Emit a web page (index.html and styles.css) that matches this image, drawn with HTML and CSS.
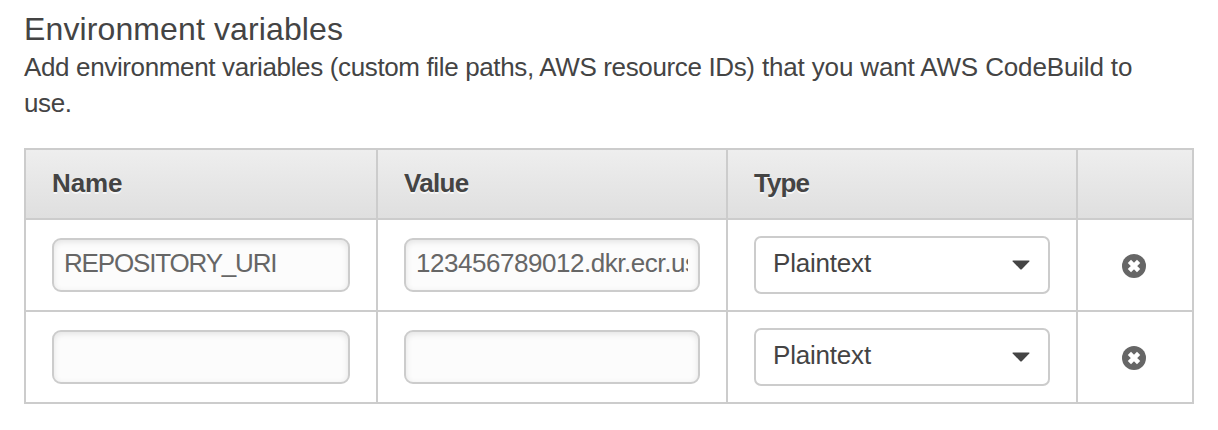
FILE: index.html
```html
<!DOCTYPE html>
<html lang="en">
<head>
<meta charset="utf-8">
<title>Environment variables</title>
<link rel="stylesheet" href="styles.css">
</head>
<body>
<main class="panel">
  <h2 class="title">Environment variables</h2>
  <p class="description"><span class="description-start">Add environment variables (custom file paths, AWS resource IDs)</span> <span class="description-end">that you want AWS CodeBuild to</span> <span class="description-start">use.</span></p>
  <div class="table">
    <div class="head"><span class="label-name">Name</span></div>
    <div class="head"><span class="label-value">Value</span></div>
    <div class="head"><span class="label-type">Type</span></div>
    <div class="head"></div>

    <div class="cell"><input class="field field-name" type="text" value="REPOSITORY_URI" aria-label="Name"></div>
    <div class="cell"><input class="field field-value" type="text" value="123456789012.dkr.ecr.us-east-1.amazonaws.com" aria-label="Value"></div>
    <div class="cell"><div class="select"><span class="select-label">Plaintext</span><svg class="caret" viewBox="0 0 18 10"><path d="M1.2 .5H16.8Q18 .5 17.3 1.4L10 9Q9 10 8 9L.7 1.4Q0 .5 1.2 .5Z"/></svg></div></div>
    <div class="cell cell-action"><svg class="remove" viewBox="0 0 24 24"><circle cx="12" cy="12" r="12"/><path d="M7.4 7.4L16.6 16.6M16.6 7.4L7.4 16.6"/></svg></div>

    <div class="cell"><input class="field field-name" type="text" aria-label="Name"></div>
    <div class="cell"><input class="field field-value" type="text" aria-label="Value"></div>
    <div class="cell"><div class="select"><span class="select-label">Plaintext</span><svg class="caret" viewBox="0 0 18 10"><path d="M1.2 .5H16.8Q18 .5 17.3 1.4L10 9Q9 10 8 9L.7 1.4Q0 .5 1.2 .5Z"/></svg></div></div>
    <div class="cell cell-action"><svg class="remove" viewBox="0 0 24 24"><circle cx="12" cy="12" r="12"/><path d="M7.4 7.4L16.6 16.6M16.6 7.4L7.4 16.6"/></svg></div>
  </div>
</main>
</body>
</html>
```

FILE: styles.css
```css
* {
  box-sizing: border-box;
}

body {
  margin: 0;
  background: #fff;
  color: #444;
  font: 26px/36px "Liberation Sans", Arial, sans-serif;
}

.panel {
  width: 1170px;
  margin-left: 24px;
  padding-top: 9px;
}

.title {
  margin: 0;
  font-size: 32px;
  font-weight: 400;
  line-height: 40px;
  letter-spacing: .12px;
}

.description {
  width: 1130px;
  margin: 0 0 27px;
}

.description-start {
  letter-spacing: -.36px;
}

.description-end {
  letter-spacing: -.15px;
}

.table {
  display: grid;
  grid-template-columns: 350px 348px 348px 114px;
  grid-template-rows: 68px 90px 90px;
  gap: 2px;
  padding: 2px;
  background: #ccc;
}

.head {
  display: flex;
  align-items: center;
  padding: 0 26px 2px;
  background: linear-gradient(#eee, #dfdfdf);
  font-weight: 700;
  text-shadow: 0 2px 0 #f6f6f6;
}

.label-name {
  letter-spacing: -.15px;
}

.label-value {
  letter-spacing: -.7px;
}

.label-type {
  letter-spacing: -.9px;
}

.cell {
  display: flex;
  align-items: center;
  padding: 0 26px;
  background: #fff;
}

.cell-action {
  justify-content: center;
}

.field {
  width: 100%;
  height: 54px;
  padding: 0 10px 4px;
  border: 2px solid #ccc;
  border-radius: 9px;
  background: #fcfcfc;
  box-shadow: inset 0 2px 6px rgba(0, 0, 0, .1);
  color: #666;
  font: inherit;
}

.field-name {
  letter-spacing: -1.17px;
}

.field-value {
  letter-spacing: -.46px;
}

.select {
  display: flex;
  align-items: center;
  justify-content: space-between;
  width: 296px;
  height: 58px;
  padding: 0 18px 4px 17px;
  border: 2px solid #ccc;
  border-radius: 7px;
}

.select-label {
  letter-spacing: -.2px;
}

.caret {
  width: 18px;
  height: 10px;
  margin-top: 4px;
  fill: #444;
}

.remove {
  width: 24px;
  height: 24px;
  margin: 2px 2px 0 0;
  fill: #666;
}

.remove path {
  fill: none;
  stroke: #fff;
  stroke-width: 4.6;
}
```
